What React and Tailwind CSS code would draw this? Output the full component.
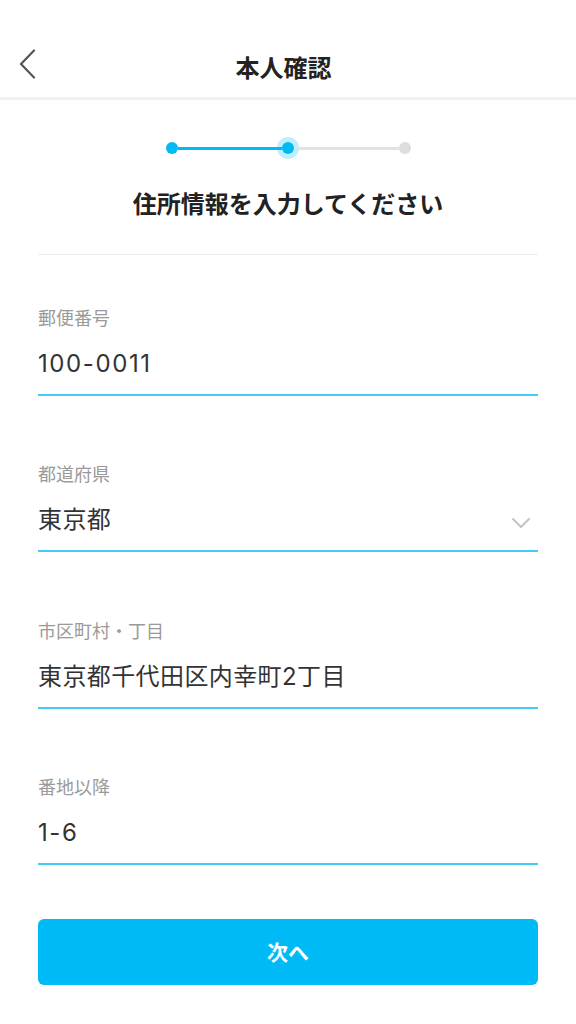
import React from "react";

const Field = ({ label, value, select, pt, latin }) => (
  <div className={pt}>
    <div className="text-[18px] leading-[24px] text-[#9a9a9a]">{label}</div>
    <div className="mt-[17px] flex items-center justify-between pb-[12px] border-b-2 border-[#45ccf6]">
      <div
        className={
          "text-[24px] leading-[36px] text-[#333333] " +
          (latin ? "tracking-[1.6px]" : "tracking-[0.4px]")
        }
        style={{ fontFamily: 'Inter, "Noto Sans CJK JP", sans-serif' }}
      >
        {value}
      </div>
      {select && (
        <svg width="20" height="13" viewBox="0 0 20 13" className="mr-[7px] mt-[6px]">
          <path d="M2 2 L10 10 L18 2" fill="none" stroke="#c4c4c4" strokeWidth="2" strokeLinecap="round" strokeLinejoin="round" />
        </svg>
      )}
    </div>
  </div>
);

export default function App() {
  return (
    <div className="w-[576px] h-[1024px] bg-white overflow-hidden" style={{ fontFamily: '"Noto Sans CJK JP", "Noto Sans", sans-serif' }}>
      <div className="h-[100px] border-b-[3px] border-[#f1f1f1] flex items-end">
        <div className="relative h-[60px] w-full flex items-center justify-center pr-[9px]">
          <svg width="17" height="30" viewBox="0 0 17 30" className="absolute left-[19px] top-[12px]">
            <path d="M15 1.5 L2 15 L15 28.5" fill="none" stroke="#555555" strokeWidth="2.2" strokeLinecap="round" strokeLinejoin="round" />
          </svg>
          <div className="text-[24px] font-bold text-[#222222] leading-[30px]">本人確認</div>
        </div>
      </div>

      <div className="pt-[36px] flex justify-center">
        <div className="w-[245px] h-[24px] flex items-center">
          <div className="w-[12px] h-[12px] rounded-full bg-[#00baf5]" />
          <div className="flex-1 h-[3px] bg-[#00baf5]" />
          <div className="w-[12px] h-[12px] rounded-full bg-[#00baf5] ring-[5px] ring-[#00baf5]/25" />
          <div className="flex-1 h-[3px] bg-[#e2e2e2]" />
          <div className="w-[12px] h-[12px] rounded-full bg-[#dddddd]" />
        </div>
      </div>

      <div className="mt-[27px] text-center text-[24px] leading-[32px] font-bold text-[#222222]">住所情報を入力してください</div>

      <div className="mx-[38px] mt-[35px] h-px bg-[#eeeeee]" />

      <div className="px-[38px]">
        <Field pt="pt-[50px]" label="郵便番号" value="100-0011" latin />
        <Field pt="pt-[65px]" label="都道府県" value="東京都" select />
        <Field pt="pt-[66px]" label="市区町村・丁目" value="東京都千代田区内幸町2丁目" />
        <Field pt="pt-[65px]" label="番地以降" value="1-6" latin />

        <button className="mt-[54px] w-full h-[66px] rounded-[6px] bg-[#00baf5] text-white text-[21px] font-bold flex items-center justify-center">
          次へ
        </button>
      </div>
    </div>
  );
}
